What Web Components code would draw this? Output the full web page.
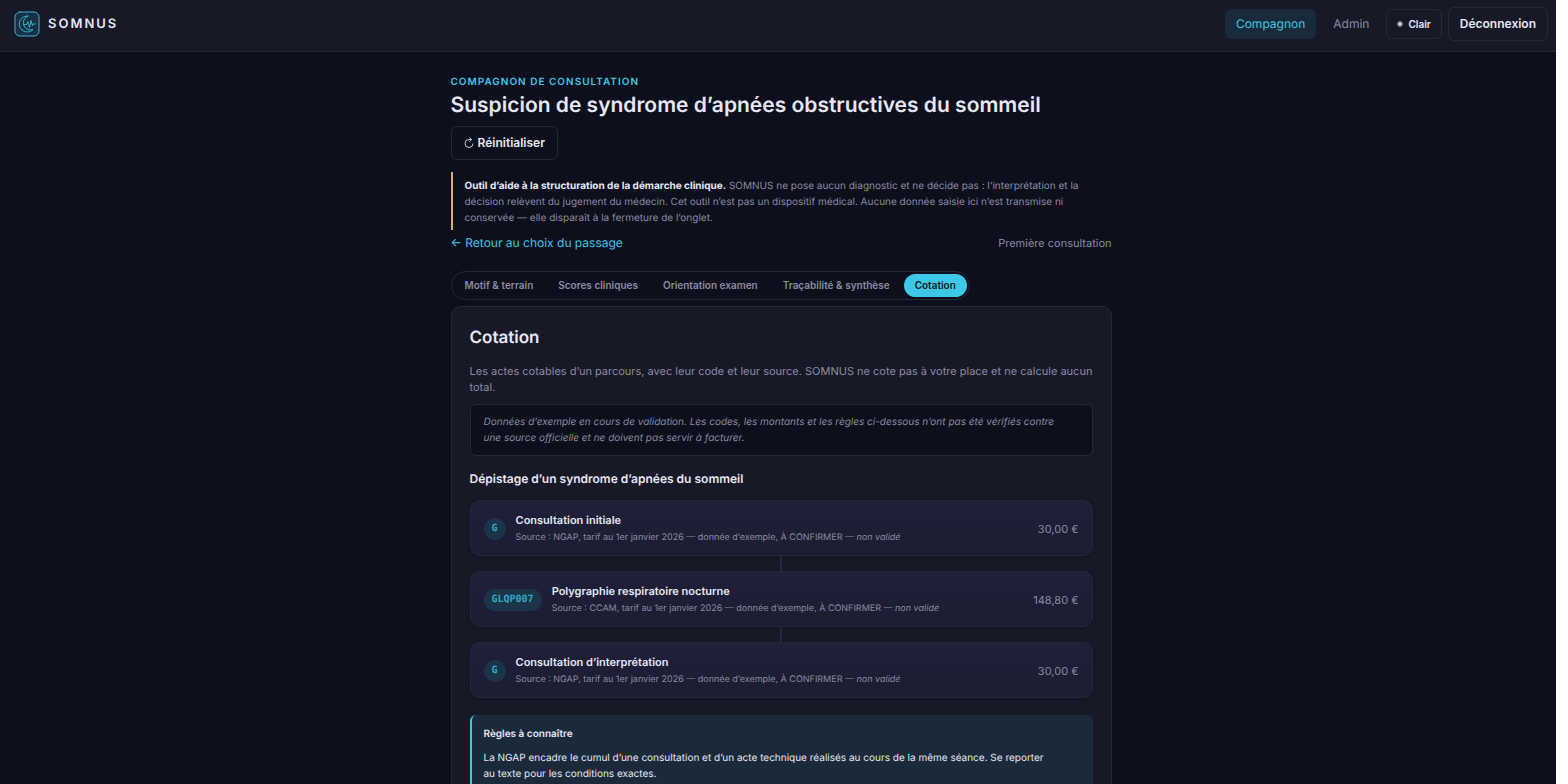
<!DOCTYPE html>
<html lang="fr">
<head>
<meta charset="utf-8">
<title>SOMNUS – Cotation</title>
<style>
    :root {
        --bg: #0d0f1c;
        --surface: #181927;
        --line: #26283a;
        --text: #e6e7f5;
        --muted: #8a8ba3;
        --accent: #3cc8e6;
        --teal: #1a2a3a;
    }

    html {
        background: #fff;
    }

    body {
        margin: 0;
        font-family: Inter, "Liberation Sans", sans-serif;
        text-rendering: geometricPrecision;
        color: var(--text);
        overflow: hidden;
        height: 100vh;
    }
</style>
</head>
<body>
<somnus-app>
    <somnus-header slot="header"></somnus-header>
    <page-intro></page-intro>
    <step-tabs></step-tabs>
    <billing-panel>
        <act-card code="G" price="30,00 €" source="NGAP">Consultation initiale</act-card>
        <act-card code="GLQP007" price="148,80 €" source="CCAM" linked>Polygraphie respiratoire nocturne</act-card>
        <act-card code="G" price="30,00 €" source="NGAP" linked>Consultation d’interprétation</act-card>
        <rules-note slot="rules" heading="Règles à connaître">La NGAP encadre le cumul d’une consultation et d’un acte technique réalisés au cours de la même séance. Se reporter<br> au texte pour les conditions exactes.</rules-note>
    </billing-panel>
</somnus-app>

<script>
class SomnusApp extends HTMLElement {
    constructor() {
        super();
        this.attachShadow({ mode: 'open' });
    }

    connectedCallback() {
        this.shadowRoot.innerHTML = `
            <style>
                :host {
                    display: block;
                    min-height: 100vh;
                    margin-right: 12px;
                    background: var(--bg);
                }

                main {
                    max-width: 661px;
                    margin: 0 auto;
                    padding: 22px 17px 0 23px;
                }
            </style>
            <slot name="header"></slot>
            <main><slot></slot></main>
        `;
    }
}

class SomnusHeader extends HTMLElement {
    constructor() {
        super();
        this.attachShadow({ mode: 'open' });
    }

    connectedCallback() {
        this.shadowRoot.innerHTML = `
            <style>
                :host {
                    display: block;
                }

                header {
                    display: flex;
                    align-items: center;
                    justify-content: space-between;
                    box-sizing: border-box;
                    min-height: 52px;
                    padding: 0 8px 3px 14px;
                    background: var(--surface);
                    border-bottom: 1px solid var(--line);
                }

                .brand, nav {
                    display: flex;
                    align-items: center;
                }

                .brand {
                    gap: 8px;
                    color: inherit;
                    text-decoration: none;
                    font-size: 13px;
                    font-weight: 600;
                    letter-spacing: 2px;
                }

                nav {
                    gap: 6px;
                }

                .link {
                    padding: 6px 11px;
                    border-radius: 6px;
                    color: var(--muted);
                    font-size: 12px;
                    line-height: 18px;
                    text-decoration: none;
                }

                .link.active {
                    background: #192b3a;
                    color: var(--accent);
                }

                button {
                    font: 600 12px/18px Inter, sans-serif;
                    color: var(--text);
                    background: transparent;
                    border: 1px solid var(--line);
                    border-radius: 6px;
                    padding: 7px 11px;
                }

                button.small {
                    display: flex;
                    align-items: center;
                    gap: 5px;
                    font-size: 10px;
                    padding: 5px 10px;
                }
            </style>
            <header>
                <a class="brand" href="#">
                    <svg width="26" height="26" viewBox="0 0 26 26" fill="none" stroke="#3cb4d0" stroke-linecap="round" stroke-linejoin="round">
                        <rect x="1" y="1" width="24" height="24" rx="5" fill="#173043"/>
                        <path d="M14 5A8 8 0 1 0 19 18.500A7 7 0 0 1 14 5Z"/>
                        <path d="M10 13.500h2.500l1.200-3 1.800 6 1.500-7 1.500 5 .8-1.500h2"/>
                    </svg>
                    <span>SOMNUS</span>
                </a>
                <nav>
                    <a class="link active" href="#">Compagnon</a>
                    <a class="link" href="#">Admin</a>
                    <button class="small" type="button">
                        <svg width="6" height="6" viewBox="0 0 6 6" stroke="#e6e7f5" stroke-width="1" aria-hidden="true">
                            <path d="M3 0v6M0 3h6M1 1l4 4M5 1l-4 4"/>
                        </svg>
                        Clair
                    </button>
                    <button type="button">Déconnexion</button>
                </nav>
            </header>
        `;
    }
}

class PageIntro extends HTMLElement {
    constructor() {
        super();
        this.attachShadow({ mode: 'open' });
    }

    connectedCallback() {
        this.shadowRoot.innerHTML = `
            <style>
                :host {
                    display: block;
                }

                .eyebrow {
                    margin: 0;
                    color: var(--accent);
                    font-size: 10px;
                    font-weight: 600;
                    line-height: 16px;
                    letter-spacing: 1px;
                    text-transform: uppercase;
                }

                h1 {
                    margin: 2px 0 6px;
                    font-size: 21px;
                    font-weight: 600;
                    line-height: 28px;
                }

                button {
                    display: flex;
                    align-items: center;
                    gap: 4px;
                    font: 600 12px/18px Inter, sans-serif;
                    color: var(--text);
                    background: transparent;
                    border: 1px solid var(--line);
                    border-radius: 6px;
                    padding: 7px 12px;
                }

                .notice {
                    margin: 12px 0 4px;
                    padding: 6px 12px 4px;
                    border-left: 2px solid #e0b050;
                    color: var(--muted);
                    font-size: 10px;
                    line-height: 16px;
                }

                .notice strong {
                    color: var(--text);
                }

                .row {
                    display: flex;
                    justify-content: space-between;
                    align-items: center;
                    font-size: 11px;
                    line-height: 18px;
                    color: var(--muted);
                }

                .row a {
                    color: var(--accent);
                    font-size: 12px;
                    text-decoration: none;
                }
            </style>
            <p class="eyebrow">Compagnon de consultation</p>
            <h1>Suspicion de syndrome d’apnées obstructives du sommeil</h1>
            <button type="button">
                <svg width="10" height="12" viewBox="0 0 10 12" fill="none" stroke="#c4c5d6" aria-hidden="true">
                    <path d="M9 6.500A4 4 0 1 1 5 2.500H7.500M5.500 .5l2.200 2L5.500 4.500"/>
                </svg>
                Réinitialiser
            </button>
            <p class="notice"><strong>Outil d’aide à la structuration de la démarche clinique.</strong> SOMNUS ne pose aucun diagnostic et ne décide pas : l’interprétation et la décision relèvent du jugement du médecin. Cet outil n’est pas un dispositif médical. Aucune donnée saisie ici n’est transmise ni conservée — elle disparaît à la fermeture de l’onglet.</p>
            <div class="row">
                <a href="#">← Retour au choix du passage</a>
                <span>Première consultation</span>
            </div>
        `;
    }
}

class StepTabs extends HTMLElement {
    constructor() {
        super();
        this.attachShadow({ mode: 'open' });
    }

    connectedCallback() {
        const steps = ['Motif &amp; terrain', 'Scores cliniques', 'Orientation examen', 'Traçabilité &amp; synthèse', 'Cotation'];

        this.shadowRoot.innerHTML = `
            <style>
                :host {
                    display: flex;
                    margin: 19px 0 6px;
                }

                nav {
                    display: flex;
                    gap: 3px;
                    padding: 2px;
                    border: 1px solid var(--line);
                    border-radius: 16px;
                }

                button {
                    font: 600 10px/15px Inter, sans-serif;
                    color: var(--muted);
                    background: transparent;
                    border: 0;
                    border-radius: 12px;
                    padding: 4px 11px;
                }

                button[aria-current] {
                    background: var(--accent);
                    color: #0c1a2a;
                }
            </style>
            <nav>
                ${steps.map((step, i) => `<button type="button" ${i === 4 ? 'aria-current="step"' : ''}>${step}</button>`).join('')}
            </nav>
        `;
    }
}

class BillingPanel extends HTMLElement {
    constructor() {
        super();
        this.attachShadow({ mode: 'open' });
    }

    connectedCallback() {
        this.shadowRoot.innerHTML = `
            <style>
                :host {
                    display: block;
                    padding: 18px;
                    background: var(--surface);
                    border: 1px solid var(--line);
                    border-radius: 10px;
                }

                h2 {
                    margin: 0 0 12px;
                    font-size: 17px;
                    font-weight: 600;
                    line-height: 26px;
                }

                p {
                    margin: 0;
                    color: var(--muted);
                    font-size: 11px;
                    line-height: 16px;
                }

                .warning {
                    margin: 9px 0 14px;
                    padding: 9px 13px;
                    background: var(--bg);
                    border: 1px solid var(--line);
                    border-radius: 6px;
                    font-size: 10px;
                    font-style: italic;
                }

                h3 {
                    margin: 0 0 12px;
                    font-size: 12px;
                    font-weight: 600;
                    line-height: 18px;
                }
            </style>
            <h2>Cotation</h2>
            <p>Les actes cotables d’un parcours, avec leur code et leur source. SOMNUS ne cote pas à votre place et ne calcule aucun total.</p>
            <p class="warning">Données d’exemple en cours de validation. Les codes, les montants et les règles ci-dessous n’ont pas été vérifiés contre<br> une source officielle et ne doivent pas servir à facturer.</p>
            <h3>Dépistage d’un syndrome d’apnées du sommeil</h3>
            <slot></slot>
            <slot name="rules"></slot>
        `;
    }
}

class ActCard extends HTMLElement {
    constructor() {
        super();
        this.attachShadow({ mode: 'open' });
    }

    connectedCallback() {
        const code = this.getAttribute('code');
        const price = this.getAttribute('price');
        const source = this.getAttribute('source');

        this.shadowRoot.innerHTML = `
            <style>
                :host {
                    display: block;
                }

                /* Vertical link to the previous act */
                :host([linked])::before {
                    content: '';
                    display: block;
                    width: 2px;
                    height: 15px;
                    margin: 0 auto;
                    background: var(--line);
                }

                article {
                    display: flex;
                    align-items: center;
                    gap: 10px;
                    padding: 10px 13px 8px;
                    border: 1px solid var(--line);
                    border-radius: 10px;
                    background: linear-gradient(180deg, #1f203a, #1c1d30);
                    box-shadow: 0 1px 4px rgba(0, 0, 0, 0.25);
                }

                .code {
                    padding: 3px 8px;
                    border-radius: 12px;
                    background: #1b3448;
                    color: #2fa9c4;
                    font: 700 10px/16px "DejaVu Sans Mono", monospace;
                }

                .body {
                    flex: 1;
                }

                h4 {
                    margin: 0;
                    font-size: 11px;
                    font-weight: 600;
                    line-height: 18px;
                }

                p {
                    margin: 0;
                    color: var(--muted);
                    font-size: 9px;
                    line-height: 18px;
                }

                .price {
                    color: var(--muted);
                    font-size: 11px;
                }
            </style>
            <article>
                <span class="code">${code}</span>
                <div class="body">
                    <h4><slot></slot></h4>
                    <p>Source : ${source}, tarif au 1er janvier 2026 — donnée d’exemple, À CONFIRMER — <em>non validé</em></p>
                </div>
                <span class="price">${price}</span>
            </article>
        `;
    }
}

class RulesNote extends HTMLElement {
    constructor() {
        super();
        this.attachShadow({ mode: 'open' });
    }

    connectedCallback() {
        this.shadowRoot.innerHTML = `
            <style>
                :host {
                    display: block;
                    margin-top: 17px;
                    padding: 10px 12px;
                    border-left: 2px solid var(--accent);
                    border-radius: 6px;
                    background: var(--teal);
                }

                h4 {
                    margin: 0 0 7px;
                    font-size: 10px;
                    font-weight: 600;
                    line-height: 18px;
                }

                p {
                    margin: 0;
                    font-size: 10px;
                    line-height: 16px;
                }
            </style>
            <h4>${this.getAttribute('heading')}</h4>
            <p><slot></slot></p>
        `;
    }
}

customElements.define('somnus-app', SomnusApp);
customElements.define('somnus-header', SomnusHeader);
customElements.define('page-intro', PageIntro);
customElements.define('step-tabs', StepTabs);
customElements.define('billing-panel', BillingPanel);
customElements.define('act-card', ActCard);
customElements.define('rules-note', RulesNote);
</script>
</body>
</html>
